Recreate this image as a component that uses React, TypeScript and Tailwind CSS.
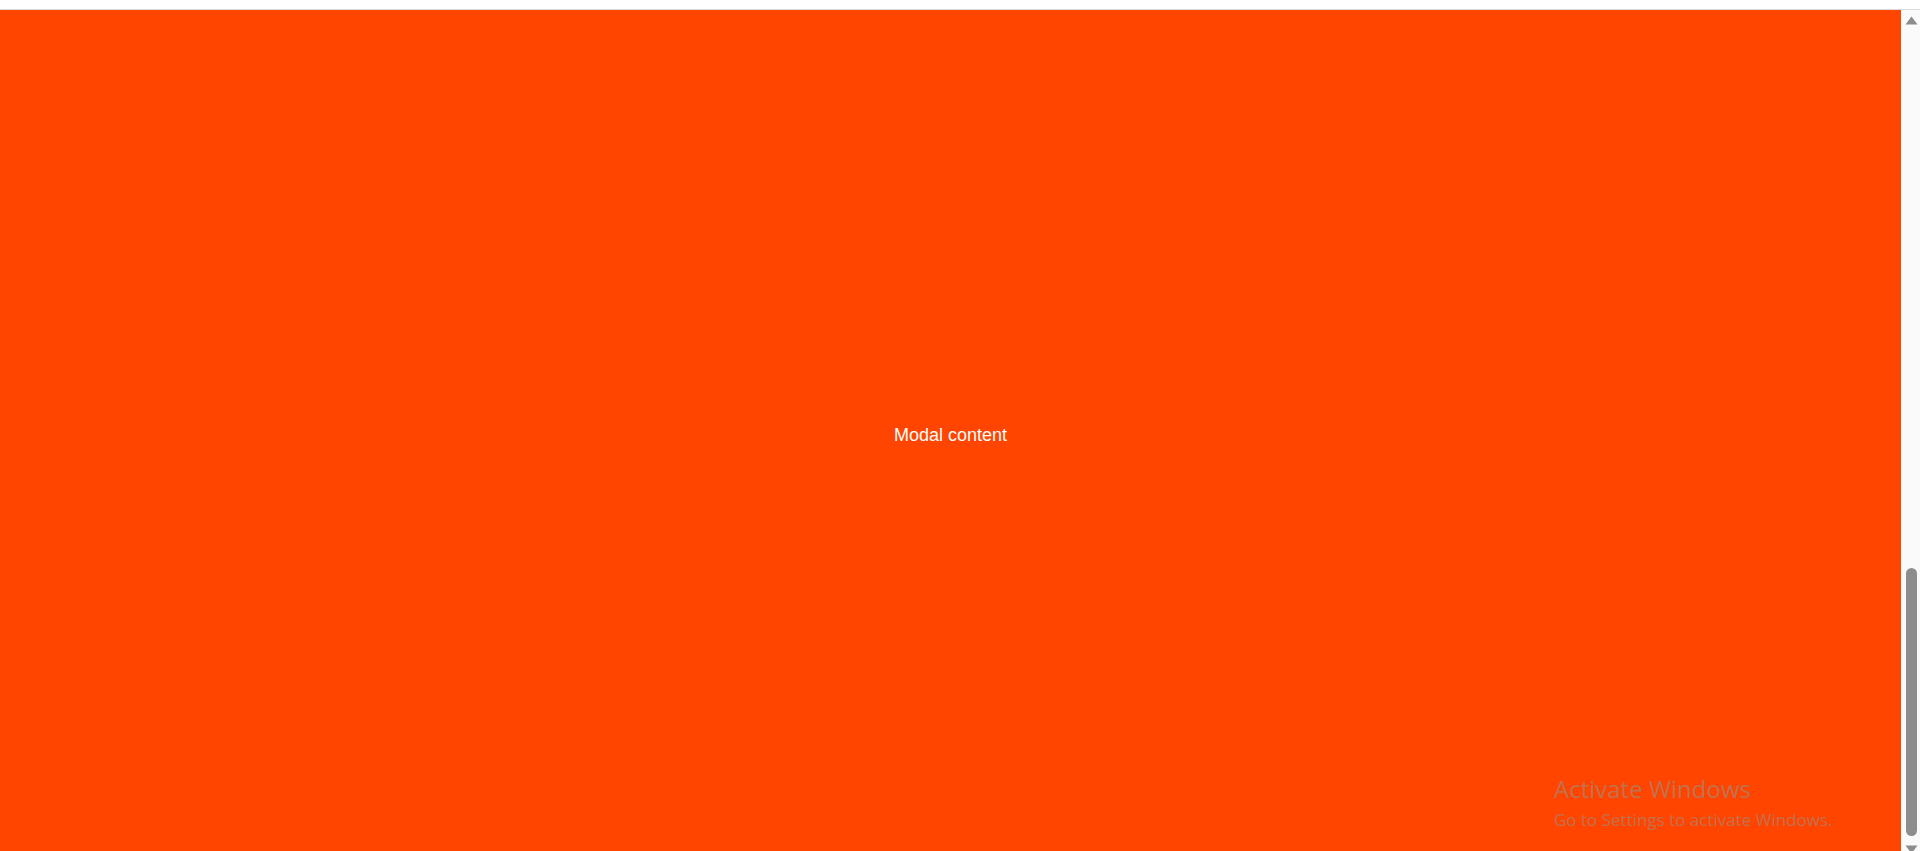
export default function App() {
  return (
    <div className="relative flex h-[851px] w-full flex-col overflow-hidden bg-white font-['Liberation_Sans',Arial,sans-serif]">
      {/* top strip */}
      <div className="h-[9px] shrink-0 bg-white" />
      <div className="h-px shrink-0 bg-[#dadada]" />

      <div className="flex min-h-0 flex-1">
        {/* modal */}
        <div className="flex flex-1 items-center justify-center bg-[#ff4500] pt-[8px]">
          <span className="text-[18px] leading-[22px] text-white">Modal content</span>
        </div>

        {/* scrollbar */}
        <div className="flex w-[19px] shrink-0 flex-col items-center overflow-hidden bg-[#fafafa] pl-[2px]">
          <svg width="13" height="9" viewBox="0 0 13 9" className="mt-[6px] shrink-0">
            <path d="M6.5 0.5 L12.5 8.5 L0.5 8.5 Z" fill="#8c8c8c" />
          </svg>
          <div className="mt-[543px] h-[268px] w-[11px] shrink-0 rounded-full bg-[#8d8d8d]" />
          <svg width="13" height="9" viewBox="0 0 13 9" className="mt-[9px] shrink-0">
            <path d="M0.5 0.5 L12.5 0.5 L6.5 8.5 Z" fill="#8c8c8c" />
          </svg>
        </div>
      </div>

      {/* windows watermark */}
      <div className="pointer-events-none absolute left-[1554px] top-[774px] font-['Open_Sans','Noto_Sans',sans-serif] text-[#c2714f]">
        <div className="text-[24px] leading-[30px]">Activate Windows</div>
        <div className="mt-[5px] text-[17px] leading-[22px]">Go to Settings to activate Windows.</div>
      </div>
    </div>
  );
}
